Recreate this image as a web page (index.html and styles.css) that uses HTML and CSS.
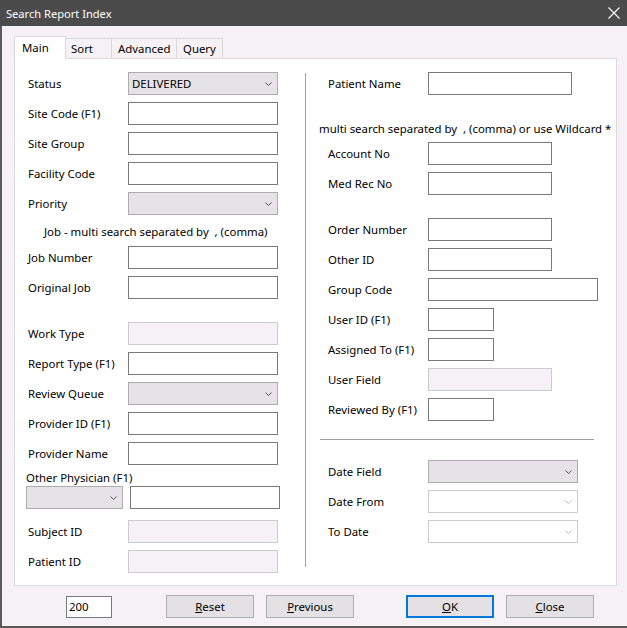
FILE: index.html
```html
<!DOCTYPE html>
<html>
<head>
<meta charset="utf-8">
<title>Search Report Index</title>
<link rel="stylesheet" href="styles.css">
</head>
<body>
<div class="window">
  <div class="titlebar">
    <span class="title">Search Report Index</span>
    <svg class="close-x" width="12" height="12" viewBox="0 0 12 12"><path d="M0.5 0.5 L11.5 11.5 M11.5 0.5 L0.5 11.5" stroke="#ffffff" stroke-width="1.1" fill="none"/></svg>
  </div>
  <div class="frame">
    <div class="tabs">
      <div class="tab active">Main</div>
      <div class="tab t-sort">Sort</div>
      <div class="tab t-adv">Advanced</div>
      <div class="tab t-query">Query</div>
    </div>
    <div class="panel">
      <div class="col left">
        <div class="row"><span class="lbl">Status</span><div class="box select">DELIVERED<svg class="chev" width="7" height="4" viewBox="0 0 7 4"><path d="M0.5 0.5 L3.5 3.5 L6.5 0.5" stroke="#555" fill="none"/></svg></div></div>
        <div class="row"><span class="lbl">Site Code (F1)</span><div class="box"></div></div>
        <div class="row"><span class="lbl">Site Group</span><div class="box"></div></div>
        <div class="row"><span class="lbl">Facility Code</span><div class="box"></div></div>
        <div class="row"><span class="lbl">Priority</span><div class="box select"><svg class="chev" width="7" height="4" viewBox="0 0 7 4"><path d="M0.5 0.5 L3.5 3.5 L6.5 0.5" stroke="#555" fill="none"/></svg></div></div>
        <div class="note note-left">Job - multi search separated by &nbsp;, (comma)</div>
        <div class="row r-job"><span class="lbl">Job Number</span><div class="box"></div></div>
        <div class="row"><span class="lbl">Original Job</span><div class="box"></div></div>
        <div class="row r-gap"><span class="lbl">Work Type</span><div class="box disabled"></div></div>
        <div class="row"><span class="lbl">Report Type (F1)</span><div class="box"></div></div>
        <div class="row"><span class="lbl">Review Queue</span><div class="box select"><svg class="chev" width="7" height="4" viewBox="0 0 7 4"><path d="M0.5 0.5 L3.5 3.5 L6.5 0.5" stroke="#555" fill="none"/></svg></div></div>
        <div class="row"><span class="lbl">Provider ID (F1)</span><div class="box"></div></div>
        <div class="row"><span class="lbl">Provider Name</span><div class="box"></div></div>
        <div class="other-lbl">Other Physician (F1)</div>
        <div class="row r-other"><div class="box select small-sel"><svg class="chev" width="7" height="4" viewBox="0 0 7 4"><path d="M0.5 0.5 L3.5 3.5 L6.5 0.5" stroke="#555" fill="none"/></svg></div><div class="box"></div></div>
        <div class="row r-subject"><span class="lbl">Subject ID</span><div class="box disabled"></div></div>
        <div class="row"><span class="lbl">Patient ID</span><div class="box disabled"></div></div>
      </div>
      <div class="vsep"></div>
      <div class="col right">
        <div class="row"><span class="lbl">Patient Name</span><div class="box w144"></div></div>
        <div class="note note-right">multi search separated by &nbsp;, (comma) or use Wildcard *</div>
        <div class="row r-acct"><span class="lbl">Account No</span><div class="box w124"></div></div>
        <div class="row"><span class="lbl">Med Rec No</span><div class="box w124"></div></div>
        <div class="row r-gap2"><span class="lbl">Order Number</span><div class="box w124"></div></div>
        <div class="row"><span class="lbl">Other ID</span><div class="box w124"></div></div>
        <div class="row"><span class="lbl">Group Code</span><div class="box w170"></div></div>
        <div class="row"><span class="lbl">User ID (F1)</span><div class="box w66"></div></div>
        <div class="row"><span class="lbl">Assigned To (F1)</span><div class="box w66"></div></div>
        <div class="row"><span class="lbl">User Field</span><div class="box w124 disabled"></div></div>
        <div class="row"><span class="lbl">Reviewed By (F1)</span><div class="box w66"></div></div>
        <div class="hsep"></div>
        <div class="row r-date"><span class="lbl">Date Field</span><div class="box select"><svg class="chev" width="7" height="4" viewBox="0 0 7 4"><path d="M0.5 0.5 L3.5 3.5 L6.5 0.5" stroke="#555" fill="none"/></svg></div></div>
        <div class="row"><span class="lbl">Date From</span><div class="box dis-select"><svg class="chev" width="7" height="4" viewBox="0 0 7 4"><path d="M0.5 0.5 L3.5 3.5 L6.5 0.5" stroke="#bdbdbd" fill="none"/></svg></div></div>
        <div class="row"><span class="lbl">To Date</span><div class="box dis-select"><svg class="chev" width="7" height="4" viewBox="0 0 7 4"><path d="M0.5 0.5 L3.5 3.5 L6.5 0.5" stroke="#bdbdbd" fill="none"/></svg></div></div>
      </div>
    </div>
    <div class="footer">
      <div class="count">200</div>
      <div class="btn b-reset"><u>R</u>eset</div>
      <div class="btn b-prev"><u>P</u>revious</div>
      <div class="btn b-ok"><u>O</u>K</div>
      <div class="btn b-close"><u>C</u>lose</div>
    </div>
  </div>
</div>
</body>
</html>
```

FILE: styles.css
```css
* { box-sizing: border-box; }
html, body { margin: 0; padding: 0; }
body {
  font-family: "Noto Sans", "Open Sans", sans-serif;
  font-size: 11.4px;
  color: #000;
  background: #f5f1f5;
}
.window {
  width: 627px;
  height: 628px;
  display: flex;
  flex-direction: column;
  background: #f5f1f5;
  overflow: hidden;
}
.titlebar {
  height: 26px;
  flex: none;
  background: #4b4b4b;
  color: #fff;
  display: flex;
  align-items: center;
  justify-content: space-between;
  padding: 0 7px 0 6px;
  font-size: 11.1px;
}
.close-x { display: block; }
.frame {
  flex: 1;
  border-left: 2px solid #5a5a5a;
  border-bottom: 2px solid #5a5a5a;
  padding-top: 10px;
  display: flex;
  flex-direction: column;
}
.tabs {
  display: flex;
  align-items: flex-end;
  height: 22px;
  margin-left: 12px;
}
.tab {
  height: 20px;
  border: 1px solid #d9d9d9;
  border-bottom: none;
  margin-left: -1px;
  padding-left: 5px;
  line-height: 19px;
}
.tab.active {
  height: 23px;
  width: 52px;
  margin-left: 0;
  margin-bottom: -1px;
  background: #fff;
  padding-left: 7px;
  line-height: 21px;
  position: relative;
  z-index: 1;
}
.t-sort { width: 47px; }
.t-adv { width: 66px; padding-left: 6px; }
.t-query { width: 47px; padding-left: 6px; }
.panel {
  margin-left: 12px;
  width: 603px;
  height: 528px;
  flex: none;
  background: #fff;
  border: 1px solid #dcdcdc;
  display: flex;
}
.col {
  display: flex;
  flex-direction: column;
  padding-top: 13px;
}
.col.left { width: 290px; padding-left: 13px; }
.col.right { padding-left: 22px; }
.vsep {
  width: 1px;
  height: 494px;
  margin-top: 14px;
  background: #a0a0a0;
}
.row {
  display: flex;
  align-items: center;
  height: 23px;
  margin-top: 7px;
}
.col > .row:first-child { margin-top: 0; }
.lbl { width: 100px; flex: none; white-space: nowrap; }
.box {
  width: 150px;
  height: 23px;
  flex: none;
  border: 1px solid #7a7a7a;
  background: #fff;
  position: relative;
}
.box.select {
  background: #e5e3e5;
  border-color: #adadad;
  padding-left: 3px;
  line-height: 21px;
}
.box.dis-select {
  border-color: #cccccc;
  background: #fff;
}
.box.disabled {
  background: #f5f1f5;
  border-color: #cccccc;
}
.chev {
  position: absolute;
  right: 5px;
  top: 9px;
  display: block;
}
.w144 { width: 144px; }
.w124 { width: 124px; }
.w170 { width: 170px; }
.w66 { width: 66px; }
.note {
  height: 16px;
  line-height: 16px;
  white-space: nowrap;
}
.note-left { margin-top: 9px; padding-left: 16px; }
.r-job { margin-top: 6px; }
.r-gap { margin-top: 23px; }
.other-lbl {
  margin-top: 5px;
  margin-left: -2px;
  height: 16px;
  line-height: 16px;
}
.r-other { margin-top: 0; margin-left: -2px; gap: 7px; }
.small-sel { width: 97px; }
.r-subject { margin-top: 11px; }
.note-right { margin-top: 26px; margin-left: -9px; }
.r-acct { margin-top: 5px; }
.r-gap2 { margin-top: 23px; }
.hsep {
  margin-top: 18px;
  margin-left: -8px;
  width: 274px;
  height: 1px;
  background: #a0a0a0;
}
.r-date { margin-top: 20px; }
.footer {
  display: flex;
  align-items: flex-start;
  padding-top: 9px;
}
.count {
  margin-top: 1px;
  margin-left: 64px;
  width: 46px;
  height: 22px;
  border: 1px solid #7a7a7a;
  background: #fff;
  padding-left: 2px;
  line-height: 20px;
}
.btn {
  width: 88px;
  height: 23px;
  background: #e3e1e3;
  border: 1px solid #adadad;
  text-align: center;
  line-height: 21px;
}
.b-reset { margin-left: 54px; }
.b-prev { margin-left: 12px; }
.b-ok { margin-left: 52px; border: 2px solid #0078d7; line-height: 19px; }
.b-close { margin-left: 12px; }
```
